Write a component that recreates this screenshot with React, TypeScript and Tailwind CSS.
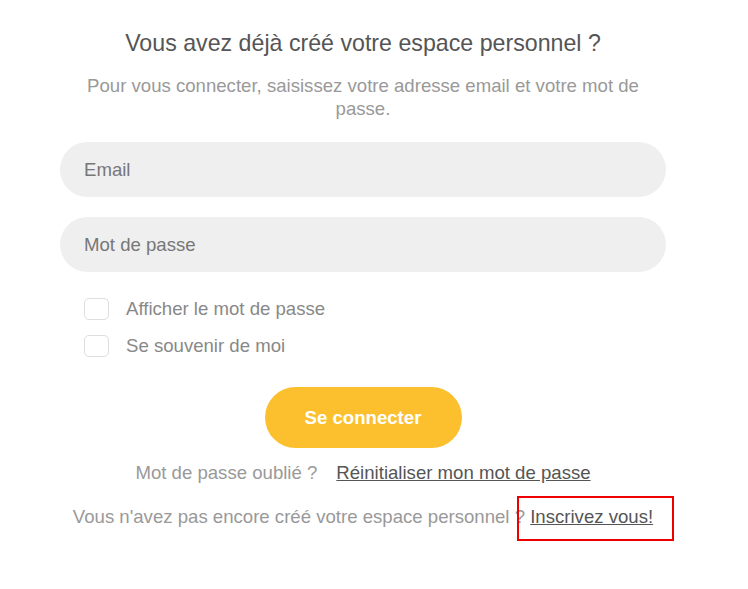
import React from "react";

export default function App() {
  return (
    <div className="w-[748px] h-[589px] bg-white" style={{ fontFamily: '"Liberation Sans", Arial, sans-serif' }}>
      <div className="ml-[60px] w-[606px] flex flex-col items-center pt-[29px]">
        <h1 className="text-[23.2px] leading-[28px] text-[#555555]">Vous avez déjà créé votre espace personnel ?</h1>
        <p className="mt-[17px] text-[18.6px] leading-[23px] text-[#999999] text-center w-[580px]">
          Pour vous connecter, saisissez votre adresse email et votre mot de passe.
        </p>
        <div className="mt-[22px] w-full flex flex-col gap-[20px]">
          <div className="h-[55px] w-full rounded-full bg-[#efefef] flex items-center pl-[24px] text-[18.6px] text-[#777777]">Email</div>
          <div className="h-[55px] w-full rounded-full bg-[#efefef] flex items-center pl-[24px] text-[18.6px] text-[#777777]">Mot de passe</div>
        </div>
        <div className="mt-[24px] w-full pl-[24px] flex flex-col gap-[11px]">
          <div className="h-[26px] flex items-center gap-[17px]">
            <div className="w-[25px] h-[22px] rounded-[5px] border border-[#dddddd]" />
            <span className="text-[18.6px] text-[#888888]">Afficher le mot de passe</span>
          </div>
          <div className="h-[26px] flex items-center gap-[17px]">
            <div className="w-[25px] h-[22px] rounded-[5px] border border-[#dddddd]" />
            <span className="text-[18.6px] text-[#888888]">Se souvenir de moi</span>
          </div>
        </div>
        <div className="mt-[28px] w-[197px] h-[61px] rounded-full bg-[#fcc02f] flex items-center justify-center text-white font-bold text-[18.6px]">
          Se connecter
        </div>
        <div className="mt-[12px] h-[26px] leading-[26px] text-[18.6px] text-[#999999] flex gap-[19px]">
          <span>Mot de passe oublié ?</span>
          <span className="underline text-[#555555]">Réinitialiser mon mot de passe</span>
        </div>
        <div className="mt-[18px] h-[26px] leading-[26px] text-[18.6px] text-[#999999] whitespace-nowrap">
          Vous n'avez pas encore créé votre espace personnel ?{" "}
          <span className="relative underline text-[#555555]">
            Inscrivez vous!
            <span className="absolute left-[-13px] right-[-21px] top-[-10px] bottom-[-14px] border-2 border-[#ee0000]" />
          </span>
        </div>
      </div>
    </div>
  );
}
